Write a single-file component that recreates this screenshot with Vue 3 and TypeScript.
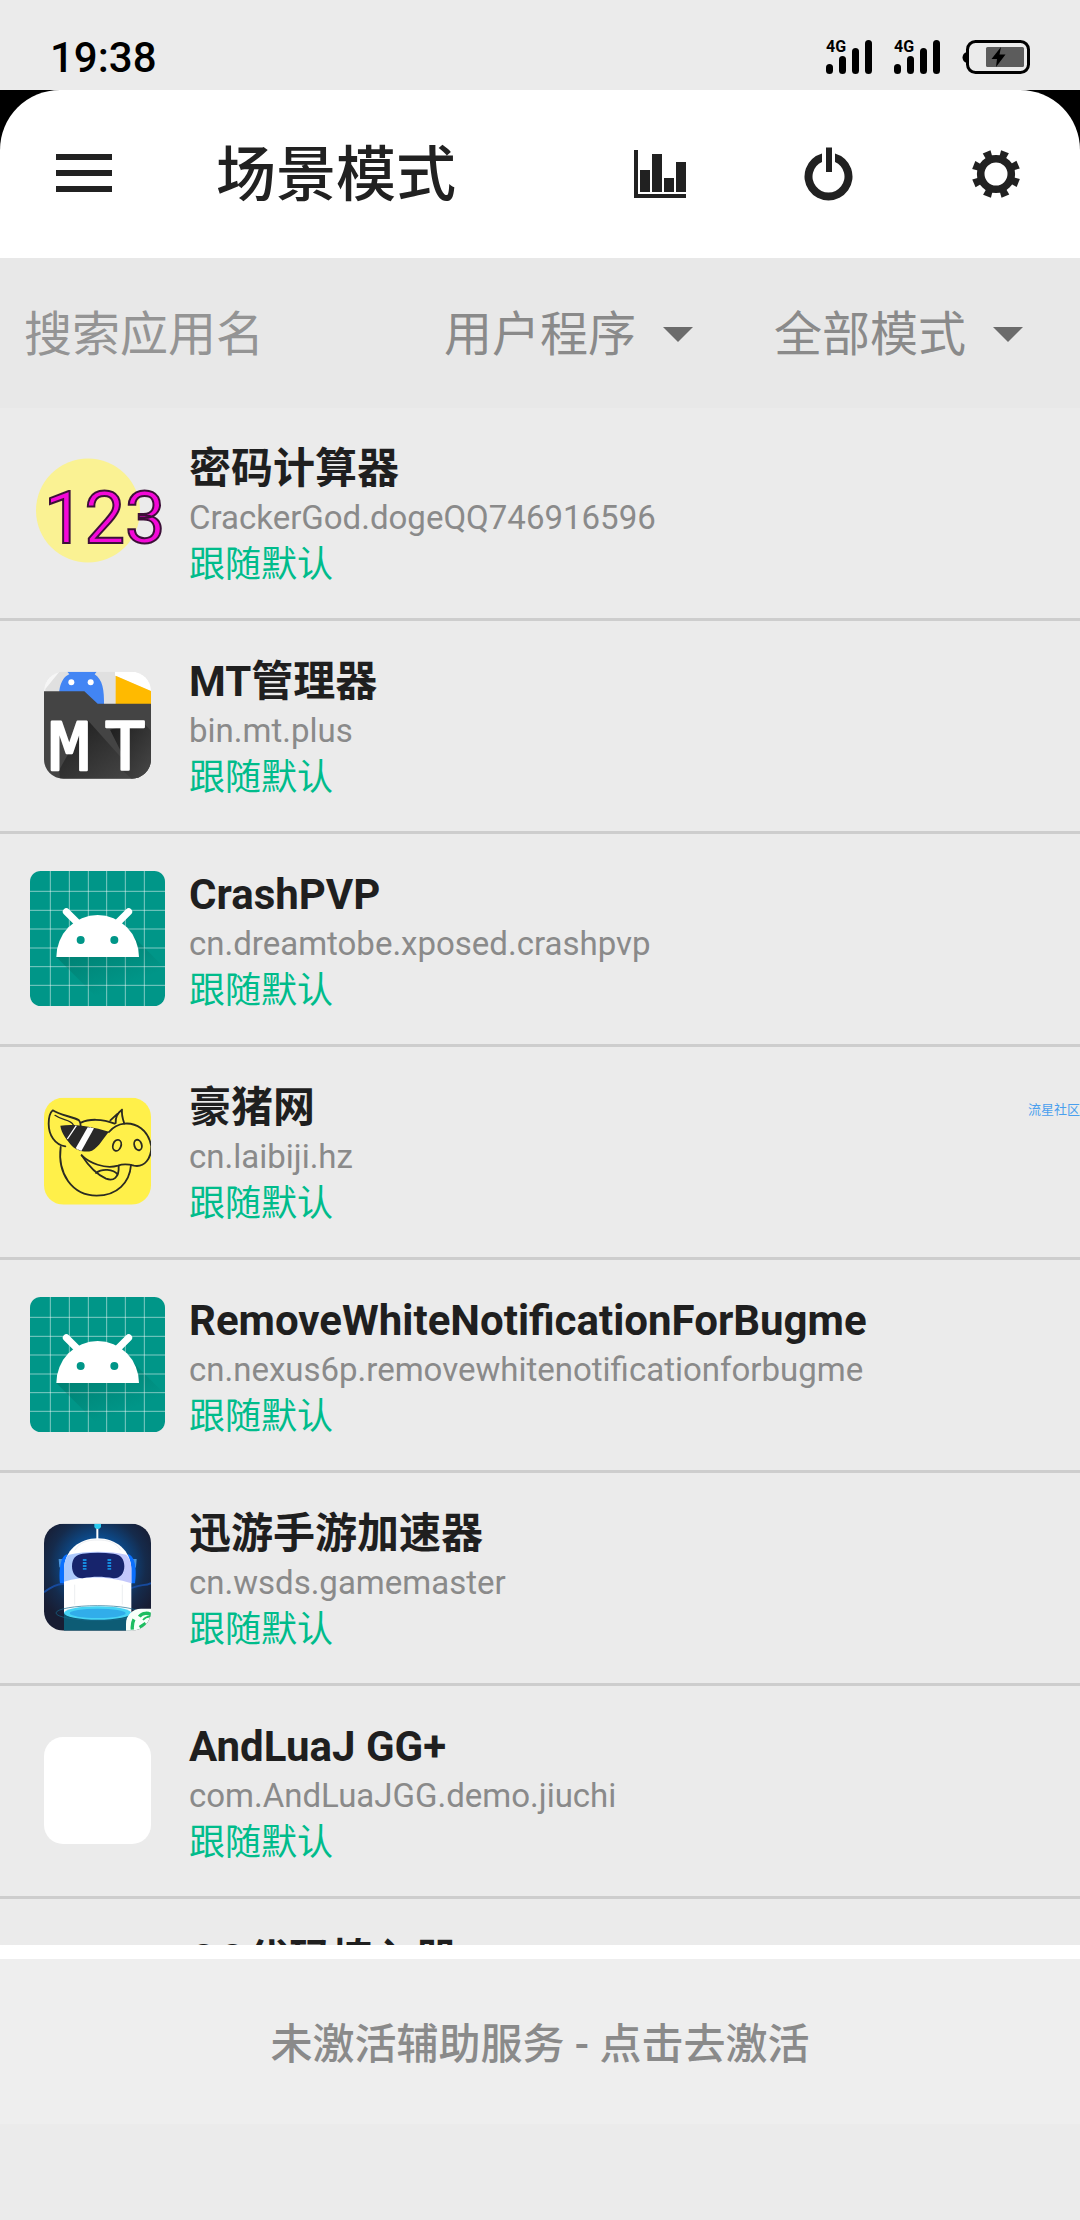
<script setup lang="ts">
import { ref } from 'vue'

type IconKind = 'digits' | 'folder' | 'android' | 'pig' | 'robot' | 'blank' | 'none'

interface AppItem {
  name: string
  pkg: string
  mode: string
  icon: IconKind
}

const apps: AppItem[] = [
  { name: '密码计算器', pkg: 'CrackerGod.dogeQQ746916596', mode: '跟随默认', icon: 'digits' },
  { name: 'MT管理器', pkg: 'bin.mt.plus', mode: '跟随默认', icon: 'folder' },
  { name: 'CrashPVP', pkg: 'cn.dreamtobe.xposed.crashpvp', mode: '跟随默认', icon: 'android' },
  { name: '豪猪网', pkg: 'cn.laibiji.hz', mode: '跟随默认', icon: 'pig' },
  {
    name: 'RemoveWhiteNotificationForBugme',
    pkg: 'cn.nexus6p.removewhitenotificationforbugme',
    mode: '跟随默认',
    icon: 'android',
  },
  { name: '迅游手游加速器', pkg: 'cn.wsds.gamemaster', mode: '跟随默认', icon: 'robot' },
  { name: 'AndLuaJ GG+', pkg: 'com.AndLuaJGG.demo.jiuchi', mode: '跟随默认', icon: 'blank' },
  { name: 'QQ代码植入器', pkg: '', mode: '', icon: 'none' },
]

const keyword = ref('')
const scope = ref('user')
const mode = ref('all')
const gridX = [151, 208, 265, 320, 376, 433]
const gridY = [154, 211, 267, 324, 380, 436]
const teeth = [22, 67, 112, 157, 202, 247, 292, 337]
</script>

<template>
  <div class="screen">
    <div class="status-bar">
      <time class="clock">19:38</time>
      <div class="indicators">
        <svg v-for="n in 2" :key="n" class="signal" viewBox="0 0 46 34" aria-hidden="true">
          <text x="0" y="12" class="net">4G</text>
          <rect x="0" y="24" width="7" height="10" rx="3.5" />
          <rect x="13" y="16" width="7" height="18" rx="3.5" />
          <rect x="26" y="8" width="7" height="26" rx="3.5" />
          <rect x="39" y="0" width="7" height="34" rx="3.5" />
        </svg>
        <svg class="battery" viewBox="0 0 68 34" aria-hidden="true">
          <path d="M5 12 C-1 13 -1 22 5 23Z" />
          <rect x="5.5" y="1.5" width="61" height="31" rx="8" fill="none" stroke="#000" stroke-width="3" />
          <rect x="24" y="7" width="38" height="20" rx="1.5" fill="#5c5c5c" />
          <path d="M39 7 L29.5 19 H35 L34 27 L43.5 14.5 H37.5Z" />
        </svg>
      </div>
    </div>

    <div class="header-back">
      <header class="header">
        <button class="tool" type="button" aria-label="菜单">
          <svg viewBox="0 0 72 72"><path d="M8 16H64V22H8ZM8 32H64V38H8ZM8 48H64V54H8Z" /></svg>
        </button>
        <h1 class="title">场景模式</h1>
        <button class="tool" type="button" aria-label="统计">
          <svg viewBox="0 0 72 72">
            <path d="M10 12H14V56H62V60H10ZM16 32H26V54H16ZM28 16H38V54H28ZM40 40H50V54H40ZM52 24H62V54H52Z" />
          </svg>
        </button>
        <button class="tool" type="button" aria-label="电源">
          <svg viewBox="0 0 72 72">
            <path d="M30 15.4A24 24 0 1 0 43 15.4V23.9A16 16 0 1 1 30 23.9ZM34 9.5H40V34H34Z" />
          </svg>
        </button>
        <button class="tool" type="button" aria-label="设置">
          <svg viewBox="0 0 72 72">
            <circle cx="36" cy="36" r="15.3" fill="none" stroke="#212121" stroke-width="7.6" />
            <path
              v-for="angle in teeth"
              :key="angle"
              d="M32.8 20 L31.8 12 H40.2 L39.2 20Z"
              :transform="`rotate(${angle} 36 36)`"
            />
          </svg>
        </button>
      </header>
    </div>

    <div class="filters">
      <input v-model="keyword" class="search" type="text" placeholder="搜索应用名" aria-label="搜索应用名" />
      <div class="picker">
        <select v-model="scope" aria-label="程序类型">
          <option value="user">用户程序</option>
        </select>
      </div>
      <div class="picker">
        <select v-model="mode" aria-label="模式">
          <option value="all">全部模式</option>
        </select>
      </div>
    </div>

    <ul class="apps">
      <li v-for="app in apps" :key="app.pkg" class="app">
        <svg v-if="app.icon === 'digits'" class="icon" viewBox="0 0 135 135" aria-hidden="true">
          <circle cx="58" cy="65.5" r="52" fill="#faf293" />
          <text x="14" y="98" class="digits">123</text>
        </svg>

        <svg v-else-if="app.icon === 'folder'" class="icon" viewBox="90 715 405 405" aria-hidden="true">
          <defs>
            <clipPath id="folder-clip"><rect x="132" y="756" width="321" height="321" rx="58" /></clipPath>
            <linearGradient id="folder-shade" x1="0" y1="0" x2="1" y2="1">
              <stop offset="0" stop-color="#1c1c1c" />
              <stop offset="1" stop-color="#484848" />
            </linearGradient>
          </defs>
          <g clip-path="url(#folder-clip)">
            <rect x="132" y="756" width="321" height="321" fill="#e0e0e0" />
            <path d="M132 756H178L136 808V830H132Z" fill="#f6f6f6" />
            <path d="M345 756H453V815L345 768Z" fill="#fff" />
            <path d="M347 768L453 814V860H347Z" fill="#ffba00" />
            <path d="M180 860C170 800 190 770 208 764L202 756H290L284 764C308 780 313 810 312 860Z" fill="#4285f4" />
            <circle cx="214" cy="788" r="9" fill="#fff" />
            <circle cx="272" cy="788" r="9" fill="#fff" />
            <path d="M132 815H253L293 852H453V1077H132Z" fill="#444" />
            <path d="M262 900L420 1077H180L178 1050Z" fill="url(#folder-shade)" />
            <path d="M425 905L453 933V1077H395L365 1050V1000L330 930Z" fill="url(#folder-shade)" />
            <text x="148" y="1050" class="mono">M</text>
            <text x="315" y="1050" class="mono">T</text>
          </g>
        </svg>

        <svg v-else-if="app.icon === 'android'" class="icon" viewBox="90 93 405 405" aria-hidden="true">
          <defs>
            <linearGradient id="droid-shade" x1="0" y1="0" x2="0.6" y2="1">
              <stop offset="0" stop-color="#004d40" stop-opacity="0.4" />
              <stop offset="0.8" stop-color="#004d40" stop-opacity="0" />
            </linearGradient>
          </defs>
          <rect x="90" y="93" width="405" height="405" rx="32" fill="#009688" />
          <g stroke="#fff" stroke-opacity="0.5" stroke-width="3">
            <line v-for="x in gridX" :key="`v${x}`" :x1="x" :x2="x" y1="93" y2="498" />
            <line v-for="y in gridY" :key="`h${y}`" :y1="y" :y2="y" x1="90" x2="495" />
          </g>
          <path d="M169 351L316 498H465L495 466V385L395 285Z" fill="url(#droid-shade)" />
          <path d="M199 215L236 252M386 215L349 252" stroke="#fff" stroke-width="21" stroke-linecap="round" />
          <path d="M169 351A124 126 0 0 1 417 351Z" fill="#fff" />
          <circle cx="242" cy="300" r="12" fill="#009688" />
          <circle cx="343" cy="300" r="12" fill="#009688" />
        </svg>

        <svg v-else-if="app.icon === 'pig'" class="icon" viewBox="90 103 405 405" aria-hidden="true">
          <defs>
            <clipPath id="pig-clip"><rect x="132" y="144" width="321" height="321" rx="58" /></clipPath>
          </defs>
          <g clip-path="url(#pig-clip)">
            <rect x="132" y="144" width="321" height="321" fill="#fff04a" />
            <g fill="none" stroke="#2b2b22" stroke-width="5.5" stroke-linejoin="round" stroke-linecap="round">
              <path d="M196 290C165 286 146 256 146 222C146 202 151 188 158 182C178 196 222 202 237 212C242 217 242 223 242 229" />
              <path d="M165 197C186 213 212 208 220 226" stroke-width="4" />
              <path d="M182 292C172 372 216 437 290 438C352 438 389 398 393 346" />
              <path d="M243 219C264 208 306 206 344 222" />
              <path d="M331 212L366 180C364 197 369 210 373 222M366 180C352 190 346 204 347 220" />
              <path d="M327 247C352 217 393 214 423 236C441 249 449 265 454 290C454 326 434 354 402 348C384 343 366 343 354 348C314 360 268 339 245 317" />
              <path d="M245 317C263 345 284 372 318 387C340 395 358 385 356 349M288 370C306 356 340 358 353 375" />
              <ellipse cx="351" cy="287" rx="12" ry="17" transform="rotate(20 351 287)" />
              <ellipse cx="414" cy="286" rx="11" ry="16" transform="rotate(-18 414 286)" />
            </g>
            <path d="M181 228C220 222 268 228 327 246C312 262 298 291 276 303C256 310 229 303 216 289C204 275 184 252 181 228Z" fill="#292929" />
            <path d="M229 228L202 268M272 234L232 299" stroke="#fff" stroke-width="4" />
            <path d="M263 233L282 236L244 304L227 296Z" fill="#fff" />
          </g>
        </svg>

        <svg v-else-if="app.icon === 'robot'" class="icon" viewBox="90 91 405 405" aria-hidden="true">
          <defs>
            <clipPath id="robot-clip"><rect x="132" y="132" width="321" height="321" rx="58" /></clipPath>
            <radialGradient id="robot-sky" cx="0.5" cy="0.4" r="0.6">
              <stop offset="0.4" stop-color="#0a5096" />
              <stop offset="0.75" stop-color="#152b4c" />
              <stop offset="1" stop-color="#181d33" />
            </radialGradient>
            <linearGradient id="robot-visor" x1="0" x2="1">
              <stop offset="0" stop-color="#a9c9fc" />
              <stop offset="1" stop-color="#c5c7fb" />
            </linearGradient>
          </defs>
          <g clip-path="url(#robot-clip)">
            <rect x="132" y="132" width="321" height="321" fill="url(#robot-sky)" />
            <path d="M132 338C160 316 184 310 200 314M386 330C414 312 435 320 453 310" fill="none" stroke="#174a9c" stroke-width="6" />
            <rect x="192" y="400" width="202" height="53" fill="#0d5c75" />
            <path d="M292 145V178" stroke="#fff" stroke-width="6" />
            <path d="M283 132H303V142C300 150 286 150 283 142Z" fill="#2ccbef" />
            <path d="M176 238H190V276L178 262ZM410 238H396V276L408 262Z" fill="#4a94dc" />
            <path d="M180 311C176 270 182 226 202 224V311ZM405 311C412 270 404 226 384 224V311Z" fill="#0a70ff" />
            <path d="M192 400V270C192 213 238 176 293 176C348 176 394 213 394 270V400Z" fill="#fff" />
            <path d="M192 306V265C193 246 200 228 207 225C255 213 331 213 379 225C390 237 393 251 394 265V311C330 290 255 288 192 306Z" fill="url(#robot-visor)" />
            <path d="M224 212C240 186 264 181 293 181C322 181 346 186 362 212M224 315V375M367 315V375" fill="none" stroke="#e3e6ea" stroke-width="2" />
            <path d="M216 260C216 236 228 224 248 222C278 218 310 218 340 222C362 224 373 238 373 260C373 282 360 297 340 296C308 290 280 290 248 296C229 297 216 282 216 260Z" fill="#17246c" />
            <path d="M254 238V270M328 238V270" stroke="#168bdf" stroke-width="11" stroke-dasharray="6 3" />
            <ellipse cx="293" cy="400" rx="125" ry="22" fill="none" stroke="#176b8e" stroke-width="2" />
            <ellipse cx="293" cy="400" rx="101" ry="20" fill="#47d4f5" />
            <ellipse cx="293" cy="401" rx="84" ry="14" fill="#31adea" />
            <rect x="378" y="387" width="130" height="130" rx="45" fill="#f8fff9" />
            <path d="M397 450C396 438 398 426 402 419M418 411C426 398 447 398 456 408M419 443L437 431" fill="none" stroke="#1dbd60" stroke-width="10" />
            <path d="M429 421C438 410 449 409 459 413" fill="none" stroke="#1dbd60" stroke-width="5" />
          </g>
        </svg>

        <svg v-else class="icon" viewBox="0 0 135 135" aria-hidden="true">
          <rect v-if="app.icon === 'blank'" x="14" y="14" width="107" height="107" rx="19" fill="#fff" />
        </svg>

        <div class="info">
          <h2 class="name">{{ app.name }}</h2>
          <p class="pkg">{{ app.pkg }}</p>
          <p class="mode">{{ app.mode }}</p>
        </div>
        <span v-if="app.icon === 'pig'" class="watermark">流星社区</span>
      </li>
    </ul>

    <footer class="footer">
      <button class="activate" type="button">未激活辅助服务 - 点击去激活</button>
    </footer>
  </div>
</template>

<style>
body {
  margin: 0;
  background: #ebebeb;
}
</style>

<style scoped>
.screen {
  display: flex;
  flex-direction: column;
  height: 100vh;
  box-sizing: border-box;
  padding-bottom: 96px;
  background: #ebebeb;
  color: #1f1f1f;
  font-family: Roboto, "Noto Sans CJK SC", sans-serif;
}

button,
input,
select {
  margin: 0;
  border: 0;
  padding: 0;
  border-radius: 0;
  background: none;
  color: inherit;
  font-family: inherit;
  outline: none;
}

.status-bar {
  flex: none;
  display: flex;
  justify-content: space-between;
  height: 90px;
  box-sizing: border-box;
  padding: 32px 50px 0;
  color: #000;
}

.clock {
  font-size: 42px;
  line-height: 52px;
  font-weight: 500;
}

.indicators {
  display: flex;
  gap: 22px;
  padding-top: 8px;
}

.signal {
  width: 46px;
  height: 34px;
  overflow: visible;
}

.net {
  font-size: 16px;
  font-weight: 700;
}

.battery {
  width: 68px;
  height: 34px;
}

.header-back {
  flex: none;
  background: #000;
}

.header {
  display: flex;
  align-items: center;
  height: 168px;
  border-radius: 60px 60px 0 0;
  background: #fff;
}

.tool {
  flex: none;
  display: flex;
  align-items: center;
  justify-content: center;
  width: 168px;
  height: 168px;
}

.tool svg {
  width: 72px;
  height: 72px;
  fill: #212121;
}

.title {
  flex: 1;
  margin: 0;
  padding: 4px 0 0 48px;
  font-size: 60px;
  line-height: 72px;
  font-weight: 500;
  color: #212121;
}

.filters {
  flex: none;
  display: flex;
  height: 150px;
  background: #e8e8e8;
  font-size: 48px;
}

.search {
  flex: 1;
  min-width: 0;
  padding: 2px 0 0 24px;
  font-size: 48px;
}

.search::placeholder {
  color: #949494;
  opacity: 1;
}

.picker {
  position: relative;
  flex: none;
  width: 330px;
}

.picker select {
  appearance: none;
  width: 100%;
  height: 100%;
  padding: 2px 0 0 24px;
  color: #8a8a8a;
  font-size: 48px;
}

.picker::after {
  content: "";
  position: absolute;
  top: 69px;
  right: 57px;
  border: 15px solid transparent;
  border-top-color: #6b6b6b;
  border-bottom: 0;
  pointer-events: none;
}

.apps {
  flex: 1;
  min-height: 0;
  margin: 0;
  padding: 0;
  overflow-y: auto;
  scrollbar-width: none;
  list-style: none;
}

.app {
  position: relative;
  display: flex;
  align-items: center;
  gap: 24px;
  height: 210px;
  padding: 0 30px;
  border-bottom: 3px solid #cdcdcd;
}

.icon {
  flex: none;
  width: 135px;
  height: 135px;
  margin-bottom: 1px;
}

.digits {
  font-size: 72px;
  fill: #f408d8;
  stroke: #3c1038;
  stroke-width: 2px;
}

.mono {
  font-family: "DejaVu Sans Mono", monospace;
  font-size: 200px;
  fill: #fff;
  stroke: #fff;
  stroke-width: 8px;
  stroke-linejoin: round;
}

.info {
  min-width: 0;
  padding-top: 6px;
}

.name,
.pkg,
.mode {
  margin: 0;
  white-space: nowrap;
}

.name {
  font-size: 42px;
  line-height: 54px;
  font-weight: 700;
}

.pkg {
  height: 44px;
  font-size: 33px;
  line-height: 44px;
  color: #8a8a8a;
}

.mode {
  height: 50px;
  font-size: 36px;
  line-height: 50px;
  color: #00bc8b;
}

.watermark {
  position: absolute;
  top: 54px;
  right: 0;
  font-size: 13px;
  line-height: 18px;
  color: #4a9fee;
}

.footer {
  flex: none;
  border-top: 14px solid #fff;
  background: #eee;
}

.activate {
  display: block;
  width: 100%;
  height: 165px;
  padding-bottom: 2px;
  color: #8a8a8a;
  font-size: 42px;
  font-weight: 500;
}
</style>
